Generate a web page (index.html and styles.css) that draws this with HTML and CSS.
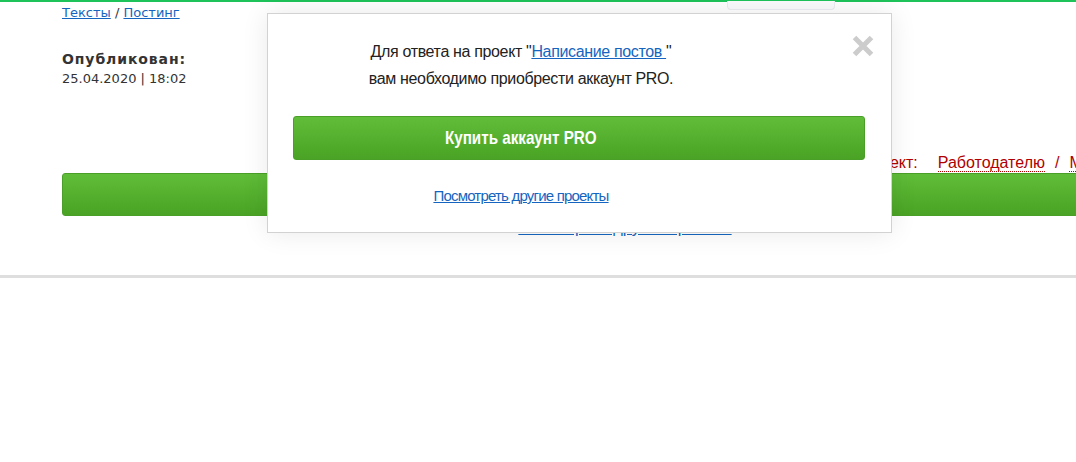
FILE: index.html
```html
<!DOCTYPE html>
<html>

<head>
  <meta charset="utf-8">
  <link rel="stylesheet" href="styles.css">
</head>

<body>
  <div class="top-bar">
    <div class="top-tab"></div>
  </div>

  <div class="page">
    <div class="crumbs">
      <a href="#">Тексты</a> / <a href="#">Постинг</a>
    </div>

    <div class="published">
      <div class="published-label">Опубликован:</div>
      <div class="published-date">25.04.2020 | 18:02</div>
    </div>

    <div class="role-row">
      <span class="role-label">Разместить проект:</span>
      <a href="#" class="role-link">Работодателю</a>
      <span class="role-sep">/</span>
      <a href="#" class="role-link">Мне</a>
    </div>

    <a href="#" class="btn-green btn-wide"></a>
    <div class="more-link">
      <a href="#">Посмотреть другие проекты</a>
    </div>
  </div>

  <div class="divider"></div>

  <div class="modal">
    <div class="modal-close">
      <svg width="22" height="22" viewBox="0 0 22 22">
        <path d="M2.5 2.5 L19.5 19.5 M19.5 2.5 L2.5 19.5" stroke="#cccccc" stroke-width="5" />
      </svg>
    </div>
    <div class="modal-text">
      Для ответа на проект "<a href="#">Написание постов </a>"<br>
      вам необходимо приобрести аккаунт PRO.
    </div>
    <a href="#" class="btn-green btn-buy"><span class="btn-buy-label">Купить аккаунт PRO</span></a>
    <div class="modal-more">
      <a href="#">Посмотреть другие проекты</a>
    </div>
  </div>
</body>

</html>
```

FILE: styles.css
```css
* {
  box-sizing: border-box;
}

body {
  margin: 0;
  padding: 0;
  background: #fff;
  color: #333;
  font-family: "DejaVu Sans", Tahoma, sans-serif;
  overflow: hidden;
  width: 1076px;
  height: 462px;
  position: relative;
}

.top-bar {
  height: 2px;
  background: #1ec35a;
  position: relative;
}

.top-tab {
  position: absolute;
  left: 727px;
  top: 1px;
  width: 108px;
  height: 9px;
  border: 1px solid #ececf2;
  border-top: none;
  border-radius: 0 0 4px 4px;
  background: #fbfbfd;
}

.page {
  margin-left: 62px;
  width: 1126px;
}

.crumbs {
  font-size: 13px;
  line-height: 18px;
  padding-top: 2px;
}

.crumbs a {
  color: #1565c0;
}

.published {
  margin-top: 27px;
  font-size: 13px;
  line-height: 20px;
}

.published-label {
  font-weight: bold;
  font-size: 14px;
  letter-spacing: 0.9px;
}

.role-row {
  margin-top: 64px;
  padding-left: 711px;
  font-family: "Liberation Sans", Arial, sans-serif;
  font-size: 16px;
  line-height: 20px;
  color: #b00000;
  display: flex;
  align-items: baseline;
}

.role-label {
  margin-right: 20px;
}

.role-link {
  color: #b00000;
  text-decoration: none;
  border-bottom: 1px dotted #b00000;
  line-height: 17px;
}

.role-sep {
  margin: 0 10px;
}

.btn-green {
  display: block;
  background: linear-gradient(to bottom, #60bd39, #4aa324);
  border: 1px solid #4a9f28;
  border-radius: 3px;
  color: #fff;
  text-decoration: none;
  text-align: center;
  font-family: "Liberation Sans", Arial, sans-serif;
  font-weight: bold;
}

.btn-wide {
  margin-top: 0;
  height: 43px;
}

.more-link {
  margin-top: 2px;
  text-align: center;
  font-family: "Liberation Sans", Arial, sans-serif;
  font-size: 16.4px;
  line-height: 18px;
}

.more-link a {
  color: #1565c0;
}

.divider {
  margin-top: 39px;
  height: 3px;
  background: #dedede;
}

.modal {
  position: absolute;
  left: 267px;
  top: 13px;
  width: 625px;
  height: 220px;
  background: #fff;
  border: 1px solid #d2d2d2;
  box-shadow: 0 0 25px rgba(0, 0, 0, 0.09);
  padding: 24px 26px 0 25px;
  font-family: "Liberation Sans", Arial, sans-serif;
}

.modal-close {
  position: absolute;
  right: 17px;
  top: 21px;
  width: 22px;
  height: 22px;
}

.modal-close svg {
  display: block;
}

.modal-text {
  text-align: center;
  font-size: 16px;
  letter-spacing: -0.35px;
  line-height: 27px;
  color: #222;
  padding-right: 116px;
}

.modal-text a {
  color: #1565c0;
}

.btn-buy {
  margin-top: 24px;
  height: 44px;
  line-height: 42px;
  font-size: 19px;
  padding-right: 116px;
}

.btn-buy-label {
  display: inline-block;
  transform: scaleX(0.8);
}

.modal-more {
  text-align: center;
  margin-top: 26px;
  font-size: 15px;
  letter-spacing: -0.8px;
  line-height: 20px;
  padding-right: 116px;
}

.modal-more a {
  color: #1565c0;
}
```
